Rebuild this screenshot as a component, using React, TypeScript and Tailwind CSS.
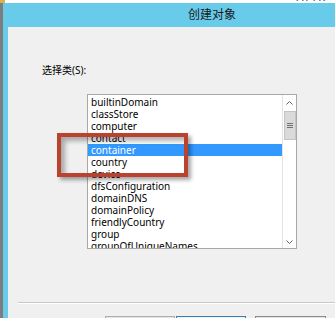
const items = [
	"builtinDomain",
	"classStore",
	"computer",
	"contact",
	"container",
	"country",
	"device",
	"dfsConfiguration",
	"domainDNS",
	"domainPolicy",
	"friendlyCountry",
	"group",
	"groupOfUniqueNames",
];

const uiFont = {
	fontFamily: '"Noto Sans", "Noto Sans CJK SC", sans-serif',
};

function Chevron({ down = false }: { down?: boolean }) {
	return (
		<svg width="7" height="4" viewBox="0 0 7 4" className="block">
			<path
				d={down ? "M0.5 0.5 L3.5 3.5 L6.5 0.5" : "M0.5 3.5 L3.5 0.5 L6.5 3.5"}
				fill="none"
				stroke="#606060"
				strokeWidth="1"
			/>
		</svg>
	);
}

export default function App() {
	return (
		<div
			className="relative w-[335px] h-[318px] overflow-hidden bg-white flex flex-col"
			style={uiFont}
		>
			{/* strip of the window behind */}
			<div className="h-[3px] shrink-0 flex justify-between items-end overflow-hidden">
				<div className="w-[5px] h-[3px] bg-[#d8b24a]" />
				<span className="text-[11px] leading-[12px] text-[#1f3f6f] mr-[9px] tracking-[1px]">
					ATTR
				</span>
			</div>

			<div className="flex-1 flex min-h-0">
				<div className="w-[3px] bg-[#7d7d7d] shrink-0" />

				{/* dialog */}
				<div className="flex-1 flex flex-col bg-[#68cbea] min-w-0">
					<div className="h-[24px] shrink-0 flex items-center justify-center pl-[86px]">
						<span className="text-[12px] leading-[14px] text-[#1a1a1a]">创建对象</span>
					</div>

					<div className="flex-1 ml-[5px] bg-[#f0f0f0] flex flex-col">
						<div className="pt-[36px] pl-[34px] text-[10px] leading-[14px] text-black">
							选择类(S):
						</div>

						{/* list box */}
						<div className="mt-[17px] ml-[79px] w-[210px] h-[155px] shrink-0 border border-[#a8a8a8] bg-white flex">
							<div className="flex-1 pt-[1px] overflow-hidden">
								{items.map((item) => (
									<div
										key={item}
										className={
											item === "container"
												? "h-[12px] pl-[3px] text-[10px] leading-[12px] bg-[#3399ff] text-white"
												: "h-[12px] pl-[3px] text-[10px] leading-[12px] text-black"
										}
									>
										{item}
									</div>
								))}
							</div>
							<div className="w-[14px] border-l border-[#e3e3e3] bg-white flex flex-col items-center pt-[1px]">
								<div className="w-[12px] h-[13px] flex items-center justify-center">
									<Chevron />
								</div>
								<div className="mt-[2px] w-[12px] h-[29px] bg-[#dadada] border border-[#c4c4c4] flex flex-col items-center justify-center gap-[1px]">
									<div className="w-[6px] h-[1px] bg-[#707070]" />
									<div className="w-[6px] h-[1px] bg-[#707070]" />
									<div className="w-[6px] h-[1px] bg-[#707070]" />
								</div>
								<div className="flex-1" />
								<div className="w-[12px] h-[13px] flex items-center justify-center">
									<Chevron down />
								</div>
							</div>
						</div>

						{/* separator */}
						<div className="mt-[53px] ml-[10px] h-[2px] shrink-0 border-t border-[#c9c9c9] border-b border-b-white" />

						{/* buttons */}
						<div className="mt-[12px] flex shrink-0">
							<div className="ml-[97px] w-[70px] h-[22px] border border-[#adadad] bg-[#e5e5e5]" />
							<div className="ml-[1px] w-[70px] h-[22px] border border-[#3c7fb1] bg-[#e5f1fb]" />
							<div className="ml-[9px] w-[71px] h-[22px] border border-[#8a8a8a] bg-[#e5e5e5]" />
						</div>
					</div>
				</div>
			</div>

			{/* annotation highlight */}
			<div className="absolute left-[57px] top-[133px] w-[131px] h-[44px] border-[4px] border-[#b9432f] shadow-[3px_3px_4px_rgba(0,0,0,0.35),inset_4px_4px_5px_rgba(0,0,0,0.3)]" />
		</div>
	);
}
